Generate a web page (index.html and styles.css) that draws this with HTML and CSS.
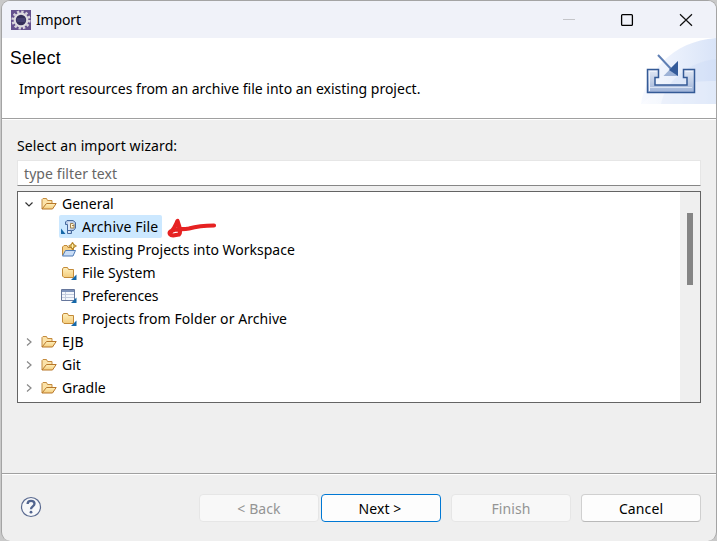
FILE: index.html
```html
<!DOCTYPE html>
<html lang="en">
<head>
<meta charset="utf-8">
<title>Import</title>
<link rel="stylesheet" href="styles.css">
</head>
<body>
<svg width="0" height="0" class="defs" aria-hidden="true">
  <defs>
    <linearGradient id="gold" x1="0" y1="0" x2="0" y2="1"><stop offset="0" stop-color="#fff0bd"/><stop offset="1" stop-color="#f3cc7c"/></linearGradient>
    <linearGradient id="steel" x1="0" y1="0" x2="0" y2="1"><stop offset="0" stop-color="#e3e9f5"/><stop offset="1" stop-color="#9eb3d8"/></linearGradient>
    <symbol id="open" viewBox="0 0 16 16">
      <path d="M1 13V3.500L2 2.500H5.500L6.500 4.500H11V7.500" fill="#fbe2a8" stroke="#c48b3e"/>
      <path d="M1 13L5.500 7.500H15.200L11.500 13Z" fill="url(#gold)" stroke="#b87729"/>
    </symbol>
    <symbol id="folder" viewBox="0 0 16 16">
      <path d="M1.500 11V4L2.500 2.500H6.500L7.500 4.500H12.500V12.500H3Z" fill="url(#gold)" stroke="#c38a38"/>
      <path d="M15.500 9.500V15H10Z" fill="#1668a8"/>
    </symbol>
  </defs>
</svg>
<div class="window">
  <header class="titlebar">
    <svg class="app" width="20" height="20" viewBox="0 0 20 20"><path fill="#65518e" d="M0 0h20v20H0z"/><circle cx="10" cy="10" r="8.300" fill="none" stroke="#d7d3dc" stroke-width="2.600" stroke-dasharray="2.350 1.996"/><circle cx="10" cy="10" r="6.300" fill="#342e59" stroke="#dedbe1" stroke-width="2.200"/><path d="M5.500 9h9M5.500 11h9" stroke="#56528a"/></svg>
    <span class="title">Import</span>
    <svg class="controls" width="132" height="14" viewBox="0 0 132 14"><path d="M0 6.500h12" stroke="#c4c5c9"/><rect x="58.600" y="1.600" width="10.800" height="10.800" rx="1" fill="none" stroke="#000" stroke-width="1.300"/><path d="M117 1.300L129 12.700M129 1.300L117 12.700" stroke="#111" stroke-width="1.200"/></svg>
  </header>
  <section class="banner">
    <div><h1>Select</h1><p>Import resources from an archive file into an existing project.</p></div>
    <svg class="art" width="75" height="66" viewBox="0 0 75 66">
      <defs><linearGradient id="sky"><stop offset="0" stop-color="#f8faff"/><stop offset="1" stop-color="#d9e4f8"/></linearGradient></defs>
      <path d="M0 66C4 36 31 3 75 0V66Z" fill="url(#sky)"/><path d="M20 66C25 42 48 24 75 21V66Z" fill="#c8d8f4" opacity=".3"/><path d="M0 66C20 48 45 43 75 43V66Z" fill="#fff" opacity=".3"/>
      <path d="M6.500 31.500H17.500V39.500H14V47H46V39.500H42.500V31.500H53.500V54.500H6.500Z" fill="url(#steel)" stroke="#345a96" stroke-width="1.500"/>
      <path d="M8.500 53V33.500H15.500M44.500 33.500H51.500" fill="none" stroke="#edf2fb"/><path d="M9 49.500H51" stroke="#d8e2f3"/>
      <path d="M17 17L31 32" stroke="#5f7fb4" stroke-width="2"/><path d="M22.500 38L37 23V38Z" fill="#9eb3d7"/><path d="M28 32L37 23V38Z" fill="#345b9a"/>
    </svg>
  </section>
  <main class="content">
    <label class="label">Select an import wizard:</label>
    <div class="filter">type filter text</div>
    <div class="tree">
      <div class="rows">
        <div class="row"><svg class="arrow" width="10" height="10"><path d="M1.500 3.500L5 7L8.500 3.500" fill="none" stroke="#333" stroke-width="1.200"/></svg><svg class="icon" width="16" height="16"><use href="#open"/></svg><span>General</span></div>
        <div class="row child"><div class="selected"><svg class="icon" width="16" height="16" viewBox="0 0 16 16"><path d="M0 9.500V15H4.500Z" fill="#1668a8"/><path d="M4.500 5.500V3L6 1.500H12L14.500 3.500V9L12.500 11.500H10.500V14.500H6.500V5.500Z" fill="#b9cbe7" stroke="#476a9e"/><path d="M8 3V14" stroke="#e9f0fb" stroke-width="1.500"/><path d="M6.500 11.500H10.500" stroke="#476a9e"/><path d="M9.500 9V4.500H12L13 5.500V9Z" fill="#fff4d4" stroke="#a1834f"/><path d="M11 6.500h2" stroke="#a1834f"/></svg><span>Archive File</span></div></div>
        <div class="row child"><svg class="icon" width="16" height="16" viewBox="0 0 16 16"><path d="M1.500 13V5L3 3.500H6L7 5.500H12.500V8" fill="#f6d28a" stroke="#c38a38"/><path d="M1.500 14L4.500 8.500H14.500L12 14Z" fill="#c9ddf6" stroke="#4d79b4"/><path d="M11.500 0L13 2.500L15.500 4L13 5.500L11.500 8L10 5.500L7.500 4L10 2.500Z" fill="#b78728" stroke="#b78728" stroke-width=".7"/><path d="M11.500 2v4M9.500 4h4" stroke="#fff1a8"/></svg><span>Existing Projects into Workspace</span></div>
        <div class="row child"><svg class="icon" width="16" height="16"><use href="#folder"/></svg><span>File System</span></div>
        <div class="row child"><svg class="icon" width="16" height="16" viewBox="0 0 16 16"><path d="M.5 1.500H13.500V12.500H.5Z" fill="#f4f7fc" stroke="#66779c"/><path d="M1 2H13V4H1Z" fill="#7d92ba"/><path d="M1 6.500H13M1 9.500H13M4.500 4V12" stroke="#c2cbdd"/><path d="M15.500 9.500V15H10Z" fill="#1668a8"/></svg><span class="tight">Preferences</span></div>
        <div class="row child"><svg class="icon" width="16" height="16"><use href="#folder"/></svg><span class="loose">Projects from Folder or Archive</span></div>
        <div class="row"><svg class="arrow" width="10" height="10"><path d="M3 1.500L7 5L3 8.500" fill="none" stroke="#888" stroke-width="1.200"/></svg><svg class="icon" width="16" height="16"><use href="#open"/></svg><span>EJB</span></div>
        <div class="row"><svg class="arrow" width="10" height="10"><path d="M3 1.500L7 5L3 8.500" fill="none" stroke="#888" stroke-width="1.200"/></svg><svg class="icon" width="16" height="16"><use href="#open"/></svg><span>Git</span></div>
        <div class="row"><svg class="arrow" width="10" height="10"><path d="M3 1.500L7 5L3 8.500" fill="none" stroke="#888" stroke-width="1.200"/></svg><svg class="icon" width="16" height="16"><use href="#open"/></svg><span>Gradle</span></div>
      </div>
      <div class="scroll"><div class="thumb"></div></div>
    </div>
  </main>
  <footer class="footer">
    <svg class="help" width="22" height="22" viewBox="0 0 22 22"><circle cx="11" cy="11" r="9.500" fill="#f7f8fa" stroke="#5a6a90" stroke-width="1.200"/><path d="M7.600 8C7.600 3.800 14.500 4 14.500 7.800C14.500 10.400 11 10.400 11 13.300" fill="none" stroke="#52658f" stroke-width="2.300"/><circle cx="11" cy="16.200" r="1.400" fill="#52658f"/></svg>
    <button class="btn back" disabled>&lt; Back</button><button class="btn next">Next &gt;</button><button class="btn finish" disabled>Finish</button><button class="btn">Cancel</button>
  </footer>
  <svg class="mark" width="56" height="26" viewBox="0 0 56 26"><path d="M49 9.500C38 9.500 31 10.500 24 12.500C17 14 11 12 5.500 15.500C3.500 17.500 5.500 19.500 8 19.500L14 18.500C16 17 14 9 12.500 5C11 8 10 12 6 16" fill="none" stroke="#e62222" stroke-width="4.200" stroke-linecap="round" stroke-linejoin="round"/></svg>
</div>
</body>
</html>
```
FILE: styles.css
```css
* { box-sizing: border-box; }
body { margin: 0; height: 541px; background: #c9c9c9; font-family: "Noto Sans", sans-serif; font-size: 14px; color: #000; overflow: hidden; }
.defs { position: absolute; }
.window { position: relative; margin-left: 1px; width: 716px; height: 541px; background: #efefef; border: 1px solid #a4a4a4; border-bottom: 0; border-radius: 9px; overflow: hidden; display: flex; flex-direction: column; }
.titlebar { height: 37px; flex: none; background: #f0f2f9; display: flex; align-items: center; padding-left: 9px; }
.title { margin-left: 5px; letter-spacing: -.15px; }
.controls { margin-left: auto; margin-right: 21px; }
.banner { height: 81px; flex: none; background: #fff; border-bottom: 1px solid #a0a0a0; display: flex; justify-content: space-between; }
h1 { margin: 10px 0 0 8px; font: 17.5px/20px "Liberation Sans", sans-serif; letter-spacing: .4px; }
p { margin: 10px 0 0 17px; line-height: 22px; white-space: nowrap; }
.art { flex: none; }
.content { flex: 1; border-top: 1px solid #fff; padding: 15px 15px 0 15px; display: flex; flex-direction: column; }
.label { height: 25px; line-height: 22px; letter-spacing: .1px; }
.filter { height: 26px; background: #fff; border: 1px solid #e6e6e6; border-bottom-color: #868686; padding-left: 6px; line-height: 25px; color: #666; letter-spacing: .08px; flex: none; }
.tree { margin-top: 5px; height: 212px; flex: none; background: #fff; border: 1px solid #646464; display: flex; justify-content: space-between; }
.row { height: 23px; display: flex; align-items: center; white-space: nowrap; padding-left: 6px; }
.row .arrow { margin-right: 7px; }
.icon { margin-right: 5px; flex: none; }
.row.child { padding-left: 43px; }
.selected { display: flex; align-items: center; height: 23px; margin-left: -2px; padding: 0 4px 0 2px; background: #cce8ff; border-radius: 2px; letter-spacing: .15px; }
.tight { letter-spacing: -.15px; }
.loose { letter-spacing: .06px; }
.scroll { width: 20px; background: #efefef; padding: 21px 0 0 7px; }
.thumb { width: 6px; height: 72px; background: #858585; }
.footer { height: 68px; flex: none; border-top: 1px solid #a0a0a0; box-shadow: inset 0 1px #fff; display: flex; align-items: center; padding: 1px 15px 0 18px; }
.help { margin-right: auto; margin-bottom: 2px; }
.btn { width: 120px; height: 28px; border: 1px solid #d0d0d0; border-bottom-color: #b9b9b9; border-radius: 4px; background: #fdfdfd; font: inherit; letter-spacing: .1px; color: #000; padding: 0; margin-left: 10px; }
.btn:disabled { background: #f8f8f8; border-color: #e6e6e6; color: #949494; }
.btn.next { margin-left: 2px; padding-right: 2px; border-color: #0078d4; }
.mark { position: absolute; left: 163px; top: 215px; }
```
